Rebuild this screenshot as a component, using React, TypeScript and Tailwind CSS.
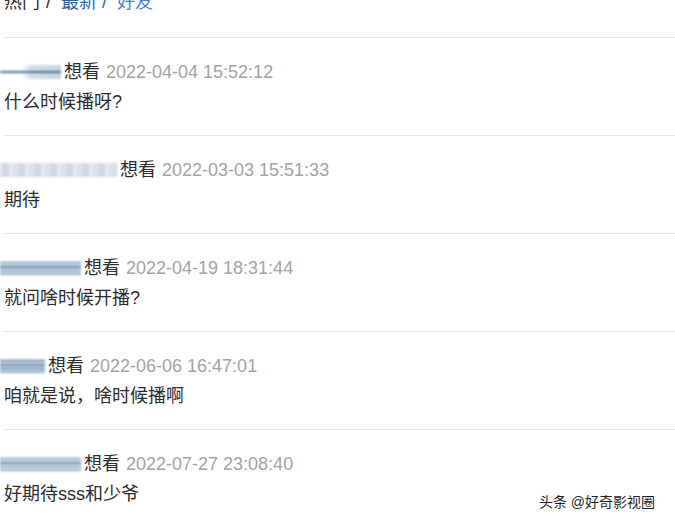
import React from 'react';

interface Comment {
  nameWidth: number;
  nameStyle: string;
  time: string;
  text: string;
}

const comments: Comment[] = [
  {
    nameWidth: 61,
    nameStyle:
      'bg-[linear-gradient(180deg,transparent_0px,transparent_6px,#3f6f9c_6px,#3f6f9c_8px,transparent_8px),linear-gradient(90deg,transparent_0px,transparent_22px,#d6dee8_30px,#c9d4e0_100%)]',
    time: '2022-04-04 15:52:12',
    text: '什么时候播呀?',
  },
  {
    nameWidth: 117,
    nameStyle:
      'bg-[repeating-linear-gradient(90deg,#dfe6ee_0px,#c8d4e2_6px,#e8edf3_11px,#d3dce7_16px)]',
    time: '2022-03-03 15:51:33',
    text: '期待',
  },
  {
    nameWidth: 81,
    nameStyle:
      'bg-[repeating-linear-gradient(180deg,#dbe4ee_0px,#8fa9c6_2px,#e6ecf3_4px,#4f76a0_6px,#d5dfea_8px)]',
    time: '2022-04-19 18:31:44',
    text: '就问啥时候开播?',
  },
  {
    nameWidth: 45,
    nameStyle:
      'bg-[repeating-linear-gradient(180deg,#d0dce9_0px,#7594b6_2px,#e2e9f1_4px,#5b7ea5_6px,#cfdae6_8px)]',
    time: '2022-06-06 16:47:01',
    text: '咱就是说，啥时候播啊',
  },
  {
    nameWidth: 81,
    nameStyle:
      'bg-[repeating-linear-gradient(180deg,#dde5ee_0px,#93aecb_2px,#e8eef4_4px,#5d80a7_6px,#d8e1eb_8px)]',
    time: '2022-07-27 23:08:40',
    text: '好期待sss和少爷',
  },
];

function BlurName({ width, style }: { width: number; style: string }) {
  return (
    <div className="-ml-1 h-[30px] flex items-center" style={{ width }}>
      <div className={`h-[14px] w-full blur-[1px] ${style}`} />
    </div>
  );
}

export default function App() {
  return (
    <div
      className="relative h-[527px] w-[675px] overflow-hidden bg-white text-[18px] text-[#2b2b2b]"
      style={{ fontFamily: '"Liberation Sans", "Noto Sans CJK SC", sans-serif' }}
    >
      {/* Tabs */}
      <div className="-mt-[10px] mb-[23px] pl-1 leading-[24px] flex">
        <span className="text-[#2b2b2b]">热门</span>
        <span className="ml-[6px] text-[#2b2b2b]">/</span>
        <span className="ml-[10px] text-[#35649a]">最新</span>
        <span className="ml-[5px] text-[#35649a]">/</span>
        <span className="ml-[10px] text-[#4a80bf]">好友</span>
      </div>

      {comments.map((c, i) => (
        <div key={i} className="ml-1 border-t border-[#e8e8e8] pt-[19px] pb-[18px]">
          <div className="flex h-[30px] items-center leading-[30px]">
            <BlurName width={c.nameWidth} style={c.nameStyle} />
            <span className="ml-[3px] text-[#2b2b2b]">想看</span>
            <span className="ml-[6px] text-[#a3a3a3]">{c.time}</span>
          </div>
          <div className="leading-[30px] text-[#2b2b2b]">{c.text}</div>
        </div>
      ))}

      {/* Watermark */}
      <div className="absolute bottom-[16px] right-[20px] text-[14px] leading-[18px] text-[#1f1f1f] [text-shadow:0_0_2px_#fff,0_0_2px_#fff]">
        头条 @好奇影视圈
      </div>
    </div>
  );
}
